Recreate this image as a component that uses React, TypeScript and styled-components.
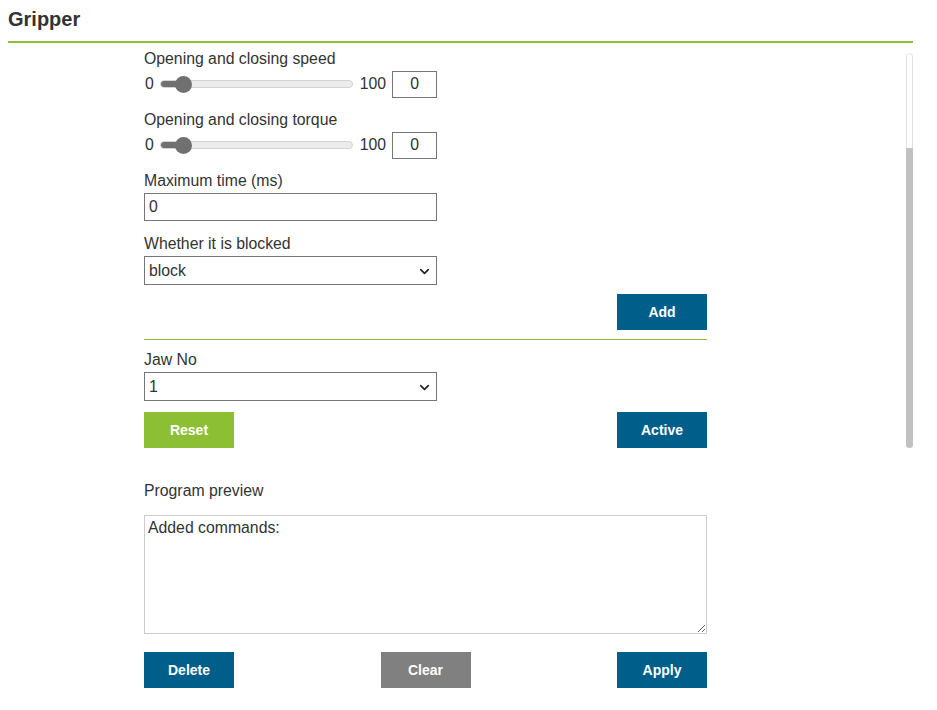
import * as React from 'react';
import styled, {createGlobalStyle} from "styled-components";
import {ChevronDown} from "lucide-react";

const GlobalStyle = createGlobalStyle`
  body {
    margin: 0;
    background: #fff;
    font-family: "Liberation Sans", Arial, sans-serif;
    color: #333;
  }
`;

const Page = styled.div`
  width: 905px;
  margin-left: 8px;
`;

const Header = styled.div`
  border-bottom: 2px solid #8dbf3a;
  box-sizing: border-box;
  height: 43px;
`;

const Title = styled.h1`
  margin: 0;
  padding-top: 7px;
  font-size: 20px;
  line-height: 24px;
  font-weight: 700;
  color: #333;
`;

const Body = styled.div`
  display: flex;
  align-items: flex-start;
`;

const Form = styled.div`
  width: 563px;
  margin-left: 136px;
  padding-top: 6px;
  display: flex;
  flex-direction: column;
`;

const Field = styled.div<{ $gap?: number }>`
  display: flex;
  flex-direction: column;
  margin-bottom: ${p => p.$gap ?? 13}px;
`;

const Label = styled.div`
  font-size: 15.8px;
  line-height: 20px;
  margin-bottom: 2px;
`;

const SliderRow = styled.div`
  display: flex;
  align-items: center;
  font-size: 15.8px;
  height: 26px;
`;

const Bound = styled.span`
  margin-left: 1px;
`;

const Track = styled.div`
  position: relative;
  width: 193px;
  height: 8px;
  margin: 0 7px 0 6px;
  border: 1px solid #d3d3d3;
  border-radius: 5px;
  background: #ececec;
  box-sizing: border-box;
`;

const Fill = styled.div`
  height: 100%;
  background: #707070;
  border-radius: 5px 0 0 5px;
`;

const Thumb = styled.div`
  position: absolute;
  top: 50%;
  width: 17px;
  height: 17px;
  margin: -8.5px 0 0 -8.5px;
  border-radius: 50%;
  background: #707070;
`;

const NumberBox = styled.input`
  width: 45px;
  height: 27px;
  margin-left: 6px;
  box-sizing: border-box;
  border: 1px solid #767676;
  border-radius: 0;
  font: 15.8px "Liberation Sans", Arial, sans-serif;
  color: #333;
  text-align: center;
  padding: 0;
`;

const TextBox = styled.input`
  width: 293px;
  height: 28px;
  box-sizing: border-box;
  border: 1px solid #767676;
  border-radius: 0;
  font: 15.8px "Liberation Sans", Arial, sans-serif;
  color: #333;
  padding: 0 4px;
`;

const SelectWrap = styled.div`
  position: relative;
  width: 293px;
  height: 29px;
  color: #222;
`;

const Select = styled.select`
  width: 100%;
  height: 100%;
  appearance: none;
  box-sizing: border-box;
  border: 1px solid #767676;
  border-radius: 0;
  background: #fff;
  font: 15.8px "Liberation Sans", Arial, sans-serif;
  color: #333;
  padding: 0 4px;
`;

const Chevron = styled(ChevronDown)`
  position: absolute;
  right: 5px;
  top: 8px;
  pointer-events: none;
`;

const ButtonRow = styled.div<{ $top?: number }>`
  display: flex;
  justify-content: space-between;
  margin-top: ${p => p.$top ?? 0}px;
`;

const Button = styled.button<{ $tone?: "blue" | "green" | "gray" }>`
  width: 90px;
  height: 36px;
  border: none;
  border-radius: 0;
  background: ${p => p.$tone === "green" ? "#8dbf35" : p.$tone === "gray" ? "#808080" : "#005e8a"};
  color: #fff;
  font: 700 14px "Liberation Sans", Arial, sans-serif;
  cursor: pointer;
`;

const Divider = styled.hr`
  width: 100%;
  height: 1px;
  margin: 9px 0 10px;
  border: none;
  background: #8dbf3a;
`;

const Preview = styled.textarea`
  width: 563px;
  height: 119px;
  box-sizing: border-box;
  border: 1px solid #ccc;
  border-radius: 0;
  padding: 3px;
  font: 15.8px "Liberation Sans", Arial, sans-serif;
  color: #333;
`;

const Scrollbar = styled.div`
  margin-left: auto;
  margin-top: 10px;
  width: 7px;
  height: 395px;
  display: flex;
  flex-direction: column;
  border-radius: 4px;
  overflow: hidden;
`;

const ScrollRest = styled.div`
  height: 95px;
  border: 1px solid #e2e2e2;
  border-bottom: none;
  border-radius: 4px 4px 0 0;
  box-sizing: border-box;
`;

const ScrollThumb = styled.div`
  flex: 1;
  background: #c1c1c1;
`;

const Slider = ({value}: { value: number }) => (
    <SliderRow>
        <Bound>0</Bound>
        <Track>
            <Fill style={{width: 23 + value * 1.7}}/>
            <Thumb style={{left: 23 + value * 1.7}}/>
        </Track>
        <span>100</span>
        <NumberBox defaultValue={value}/>
    </SliderRow>
);

export default function App() {
    return (
        <>
            <GlobalStyle/>
            <Page>
                <Header>
                    <Title>Gripper</Title>
                </Header>
                <Body>
                    <Form>
                        <Field>
                            <Label>Opening and closing speed</Label>
                            <Slider value={0}/>
                        </Field>
                        <Field>
                            <Label>Opening and closing torque</Label>
                            <Slider value={0}/>
                        </Field>
                        <Field>
                            <Label>Maximum time (ms)</Label>
                            <TextBox defaultValue="0"/>
                        </Field>
                        <Field $gap={0}>
                            <Label>Whether it is blocked</Label>
                            <SelectWrap>
                                <Select defaultValue="block">
                                    <option value="block">block</option>
                                    <option value="nonblock">non-block</option>
                                </Select>
                                <Chevron size={15} strokeWidth={2.6}/>
                            </SelectWrap>
                        </Field>
                        <ButtonRow $top={9}>
                            <span/>
                            <Button>Add</Button>
                        </ButtonRow>
                        <Divider/>
                        <Field $gap={0}>
                            <Label>Jaw No</Label>
                            <SelectWrap>
                                <Select defaultValue="1">
                                    <option value="1">1</option>
                                    <option value="2">2</option>
                                </Select>
                                <Chevron size={15} strokeWidth={2.6}/>
                            </SelectWrap>
                        </Field>
                        <ButtonRow $top={11}>
                            <Button $tone="green">Reset</Button>
                            <Button>Active</Button>
                        </ButtonRow>
                        <Field $gap={0} style={{marginTop: 33}}>
                            <Label style={{marginBottom: 14}}>Program preview</Label>
                            <Preview readOnly defaultValue="Added commands:"/>
                        </Field>
                        <ButtonRow $top={18}>
                            <Button>Delete</Button>
                            <Button $tone="gray">Clear</Button>
                            <Button>Apply</Button>
                        </ButtonRow>
                    </Form>
                    <Scrollbar>
                        <ScrollRest/>
                        <ScrollThumb/>
                    </Scrollbar>
                </Body>
            </Page>
        </>
    );
}
